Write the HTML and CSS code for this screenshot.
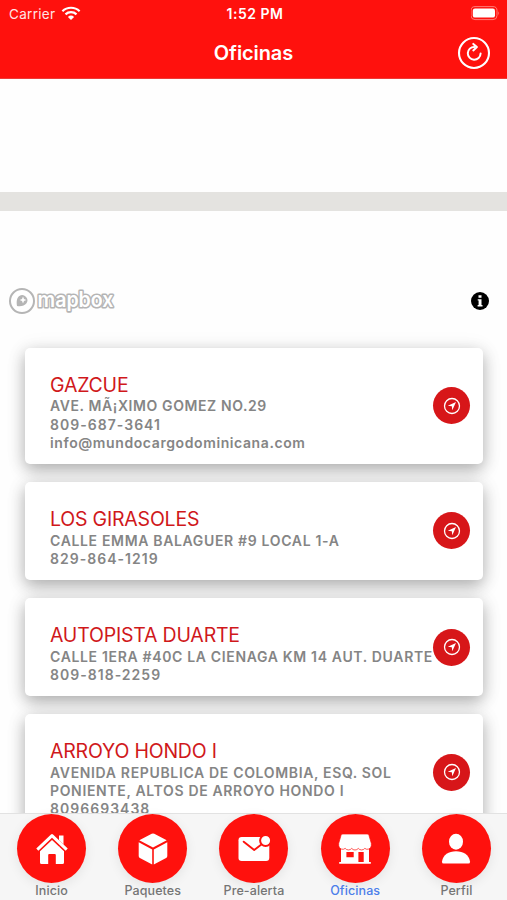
FILE: index.html
```html
<!DOCTYPE html>
<html lang="es">
<head>
<meta charset="utf-8">
<title>Oficinas</title>
<link rel="stylesheet" href="styles.css">
</head>
<body>
<svg class="defs" width="0" height="0">
  <symbol id="locate" viewBox="0 0 18 18">
    <circle cx="9" cy="9" r="7.5" fill="none" stroke="#fff" stroke-width="1.3"/>
    <path d="M13 5 L4.800 8.700 L8.800 9.200 L9.300 13.200 Z" fill="#fff"/>
  </symbol>
</svg>
<div class="screen">
  <header class="header">
    <div class="status">
      <div class="carrier"><span>Carrier</span>
        <svg width="20" height="15" viewBox="0 0 20 15" fill="none" stroke="#fff" stroke-width="2.2"><path d="M1.4 5.2a12.4 12.4 0 0 1 17.2 0M4.5 8.4a8 8 0 0 1 11 0"/><path d="M10 14 6.9 10.9a4.5 4.5 0 0 1 6.2 0Z" fill="#fff" stroke="none"/></svg>
      </div>
      <div class="clock">1:52 PM</div>
      <svg class="battery" width="30" height="15" viewBox="0 0 30 15"><rect x="0" y=".6" width="26" height="13" rx="4" fill="none" stroke="#ff7a76" stroke-width="1"/><rect x="1.800" y="2.600" width="22.200" height="9" rx="2.200" fill="#fff"/><path d="M27.400 5.200q1.700 2 0 4z" fill="#ff8a86"/></svg>
    </div>
    <div class="navbar">
      <h1>Oficinas</h1>
      <svg class="refresh" width="34" height="34" viewBox="0 0 34 34" fill="none" stroke="#fff"><circle cx="17" cy="17" r="15" stroke-width="2.100"/><path d="M17.400 10.900a6.400 6.400 0 1 0 6.200 6.600" stroke-width="2" stroke-linecap="round"/><path d="m16.300 7.900 3.600 3.200-3.600 3.300" stroke-width="2" stroke-linecap="round" stroke-linejoin="round"/></svg>
    </div>
  </header>
  <section class="map">
    <div class="road"></div>
    <div class="attribution">
      <svg width="110" height="30" viewBox="0 0 110 30">
        <circle cx="14" cy="15" r="12" fill="#fff" stroke="#b5b5b5" stroke-width="2"/>
        <path d="M9 20c-.7-5-.2-8 2.300-10a5.200 5.200 0 0 1 7.200 7.200C16.500 19.900 13 20.600 9 20Z" fill="#b5b5b5"/>
        <path d="m15 10.600 1 2.400 2.400 1-2.400 1-1 2.400-1-2.400-2.400-1 2.400-1z" fill="#fff"/>
        <text class="wordmark" x="29.500" y="21" textLength="76" lengthAdjust="spacingAndGlyphs">mapbox</text>
      </svg>
      <svg class="info" width="18" height="18" viewBox="0 0 18 18"><circle cx="9" cy="9" r="9" fill="#000"/><path d="M7.500 3.300h3v2.400h-3zM6.700 7.200h3.800v5.800h1v1.400H6.600V13h1V8.600h-.9z" fill="#fff"/></svg>
    </div>
  </section>
  <main class="offices">
    <article class="card"><div class="info-text"><h2>GAZCUE</h2><p class="snug">AVE. MÃ¡XIMO GOMEZ NO.29</p><p class="phone">809-687-3641</p><p class="snug">info@mundocargodominicana.com</p></div><div class="go"><svg width="18" height="18"><use href="#locate"/></svg></div></article>
    <article class="card"><div class="info-text"><h2>LOS GIRASOLES</h2><p>CALLE EMMA BALAGUER #9 LOCAL 1-A</p><p class="phone">829-864-1219</p></div><div class="go"><svg width="18" height="18"><use href="#locate"/></svg></div></article>
    <article class="card"><div class="info-text"><h2>AUTOPISTA DUARTE</h2><p>CALLE 1ERA #40C LA CIENAGA KM 14 AUT. DUARTE</p><p class="phone">809-818-2259</p></div><div class="go"><svg width="18" height="18"><use href="#locate"/></svg></div></article>
    <article class="card"><div class="info-text"><h2>ARROYO HONDO I</h2><p>AVENIDA REPUBLICA DE COLOMBIA, ESQ. SOL<br>PONIENTE, ALTOS DE ARROYO HONDO I</p><p class="phone">8096693438</p></div><div class="go"><svg width="18" height="18"><use href="#locate"/></svg></div></article>
  </main>
  <nav class="tabs">
    <div class="tab"><div class="disc"><svg width="34" height="34" viewBox="0 0 34 34" fill="#fff"><path d="M24 3.500h4.500V15H24Z"/><path d="M2.600 18.400 17 4.600 31.400 18.400" fill="none" stroke="#ff110d" stroke-width="4.600"/><path d="M2.300 17.600 17 3.600 31.700 17.600" fill="none" stroke="#fff" stroke-width="3" stroke-linejoin="round"/><path d="M17 8 5 19.300V30.500q0 1.500 1.500 1.500h6.700V23q0-1 1-1h5.600q1 0 1 1v9h6.700q1.500 0 1.500-1.500V19.300Z"/></svg></div><span>Inicio</span></div>
    <div class="tab"><div class="disc"><svg width="34" height="34" viewBox="0 0 34 34" fill="#fff"><path d="M15.700 1.800q1.300-.6 2.600 0L30.700 8.300 17 15.600 3.300 8.300ZM2.700 10.200 16.200 17.500v15L3.900 26q-1.200-.7-1.200-2ZM31.300 10.200 17.800 17.500v15L30.100 26q1.200-.7 1.200-2Z"/></svg></div><span>Paquetes</span></div>
    <div class="tab"><div class="disc"><svg width="34" height="34" viewBox="0 0 34 34"><rect x="1.500" y="5" width="30.800" height="24" rx="3.200" fill="#fff"/><path d="m6.700 9.700 10.500 8.300L25 12" fill="none" stroke="#ff110d" stroke-width="1.900" stroke-linecap="round" stroke-linejoin="round"/><circle cx="28.600" cy="8.500" r="5.500" fill="#fff" stroke="#ff110d" stroke-width="2"/></svg></div><span>Pre-alerta</span></div>
    <div class="tab active"><div class="disc"><svg width="34" height="34" viewBox="0 0 34 34" fill="#fff"><path fill-rule="evenodd" d="M3 15h28v15h1.800v1.700H1.200V30H3Zm5.400 5v5.300h7.300V20Zm12 0v10h5.300V20Z"/><path d="M4.800 2h24.400q1.200 0 1.700 1.100l2.400 8.200v2.500a4 4 0 0 1-6.500 2.600 4.200 4.200 0 0 1-6.500 0 4.200 4.200 0 0 1-6.600 0 4.200 4.200 0 0 1-6.500 0A4 4 0 0 1 .7 13.800v-2.500L3.100 3.100Q3.600 2 4.800 2Z" stroke="#ff110d" stroke-width=".7"/></svg></div><span>Oficinas</span></div>
    <div class="tab"><div class="disc"><svg width="34" height="34" viewBox="0 0 34 34" fill="#fff"><ellipse cx="17" cy="9.700" rx="7" ry="8"/><path d="M3 29.400C4.200 22.700 9.500 19.300 17 19.300s12.800 3.400 14 10.100q.2 2.200-1.700 2.200H4.700Q2.800 31.600 3 29.400Z"/></svg></div><span>Perfil</span></div>
  </nav>
</div>
</body>
</html>
```

FILE: styles.css
```css
* { box-sizing: border-box; }
body { margin: 0; background: #fff; font-family: Inter, "Liberation Sans", sans-serif; }
h1, h2, p { margin: 0; }
.defs { position: absolute; }
.screen { width: 507px; height: 900px; overflow: hidden; display: flex; flex-direction: column; background: #fefefe; }

.header { flex: none; height: 79px; background: #ff110d; color: #fff; border-bottom: 1px solid #ed3b38; }
.status { height: 27px; display: grid; grid-template-columns: 1fr 60px 1fr; align-items: center; padding: 0 6px 0 9px; font-size: 13.5px; }
.carrier { display: flex; align-items: center; gap: 6px; color: #ffe5e4; letter-spacing: .3px; }
.clock { font-size: 14px; font-weight: 600; letter-spacing: .5px; white-space: nowrap; text-align: center; }
.battery { justify-self: end; }
.navbar { height: 51px; display: grid; grid-template-columns: 1fr auto 1fr; align-items: center; padding: 0 16px; }
h1 { grid-column: 2; font-size: 20px; font-weight: 600; letter-spacing: -.1px; }
.refresh { justify-self: end; }

.map { flex: none; height: 268px; display: flex; flex-direction: column; padding-top: 113px; }
.road { height: 19px; background: #e4e3e0; }
.attribution { display: flex; justify-content: space-between; align-items: center; margin-top: 75px; padding: 0 18px 0 8px; height: 30px; }
.wordmark { font: 600 21px Inter, sans-serif; fill: #fff; stroke: #b5b5b5; stroke-width: 3.2px; stroke-linejoin: round; paint-order: stroke; }

.offices { flex: 1; min-height: 0; overflow: hidden; display: flex; flex-direction: column; gap: 18.4px; padding: 20.5px 24.5px 0 25px; margin-top: -20px; }
.card { flex: none; display: flex; align-items: center; justify-content: space-between; background: #fff; border-radius: 5px; padding: 25px 12.5px 11.6px 25px; box-shadow: 0 6px 16px rgba(0, 0, 0, .28), 0 2px 22px rgba(0, 0, 0, .08); }
.info-text { flex: 1; min-width: 0; white-space: nowrap; color: #858585; font-weight: 600; font-size: 14px; line-height: 18.2px; letter-spacing: .66px; }
.snug { letter-spacing: .6px; }
.phone { letter-spacing: 1.02px; }
h2 { color: #d0181b; font-size: 19.5px; font-weight: 400; line-height: 24.8px; letter-spacing: -.2px; }
.go { flex: none; width: 37px; height: 37px; margin-top: -13px; border-radius: 50%; background: #d71619; display: grid; place-items: center; }

.tabs { flex: none; position: relative; height: 86px; display: grid; grid-template-columns: repeat(5, 1fr); background: #f6f6f6; box-shadow: 0 -1px 0 #e2e2e2; padding-left: 1px; }
.tab { display: flex; flex-direction: column; align-items: center; color: #757575; font-size: 12.5px; font-weight: 500; line-height: 16px; letter-spacing: .1px; }
.disc { width: 69px; height: 69px; border-radius: 50%; background: #ff110d; display: grid; place-items: center; box-shadow: 0 3px 12px rgba(0, 0, 0, .08); }
.active { color: #4c7eea; }
```
